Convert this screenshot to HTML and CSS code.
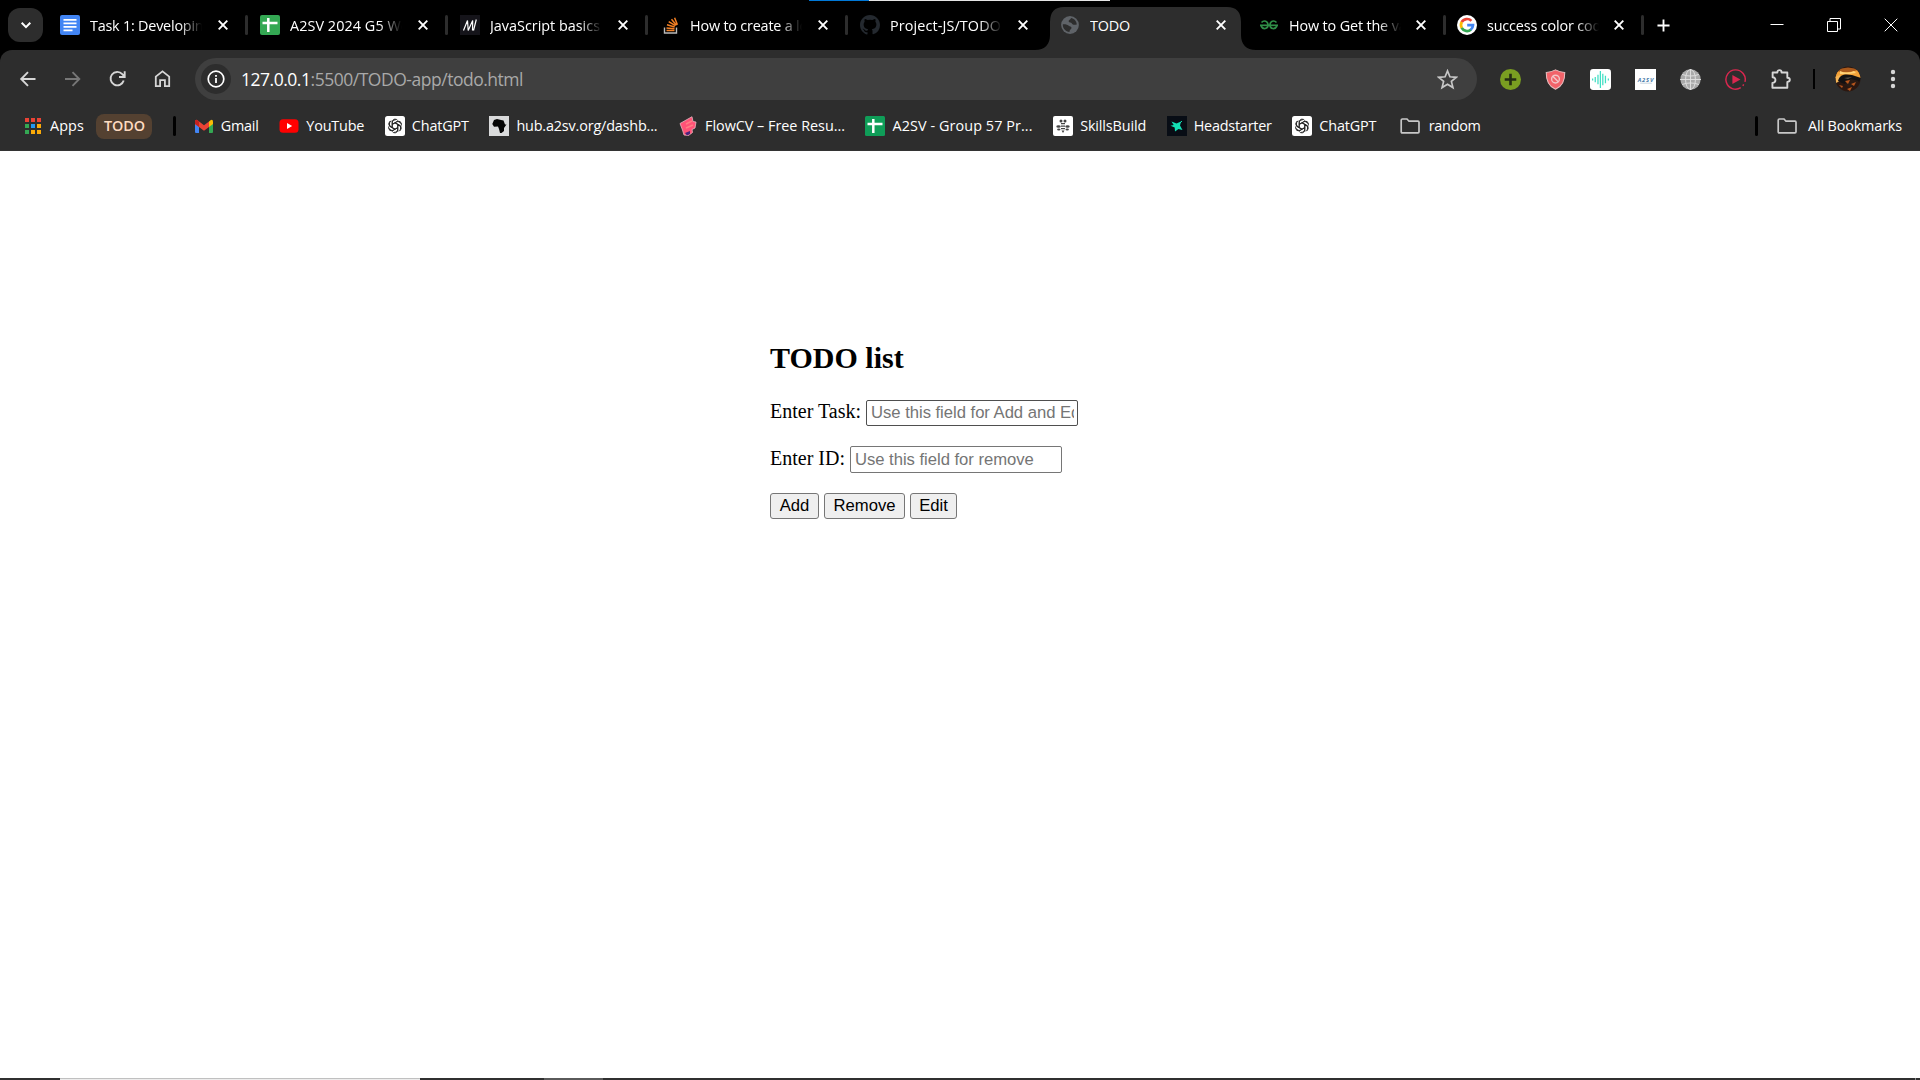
FILE: index.html
```html
<!DOCTYPE html>
<html lang="en">
<head>
<meta charset="utf-8">
<title>TODO</title>
<link rel="stylesheet" href="styles.css">
</head>
<body>
<svg class="defs" width="0" height="0">
  <symbol id="x" viewBox="0 0 16 16"><path d="M3.7 3.7l8.6 8.6M12.3 3.7l-8.6 8.6" stroke="#fff" stroke-width="1.9" fill="none"/></symbol>
  <symbol id="gpt" viewBox="0 0 20 20"><rect width="20" height="20" rx="2.5" fill="#fff"/><g fill="none" stroke="#222" stroke-width=".95"><path id="petal" d="M7.2 11.4V6.2a3 3 0 0 1 5.5-1.7M7.2 8.4l4.2-2.4a3 3 0 0 1 4.3 1.6"/><use href="#petal" transform="rotate(60 10 10)"/><use href="#petal" transform="rotate(120 10 10)"/><use href="#petal" transform="rotate(180 10 10)"/><use href="#petal" transform="rotate(240 10 10)"/><use href="#petal" transform="rotate(300 10 10)"/></g></symbol>
  <symbol id="folder" viewBox="0 0 20 20"><path d="M1.200 4.200q0-1.200 1.200-1.200H7l2 2.200h9q1 0 1 1v9.600q0 1-1 1H2.200q-1 0-1-1z" fill="none" stroke="#c7c7c7" stroke-width="1.700"/></symbol>
</svg>

<header class="browser">
  <div class="edge"><i class="edge-blue"></i><i class="edge-light"></i></div>
  <div class="tabstrip">
    <div class="tabsearch"><svg width="12" height="12" viewBox="0 0 12 12"><path d="M1.700 3.800L6 8.100l4.300-4.300" stroke="#fff" stroke-width="2" fill="none"/></svg></div>
    <div class="tab">
      <svg class="ico" viewBox="0 0 20 20"><rect width="20" height="20" rx="2" fill="#4285f4"/><path d="M3.500 4.800h13M3.500 8.300h13M3.500 11.800h13M3.500 15.300h9" stroke="#fff" stroke-width="1.700"/></svg>
      <div class="title"><span data-w="121">Task 1: Developing</span></div><svg class="close"><use href="#x"/></svg><i class="sep"></i>
    </div>
    <div class="tab">
      <svg class="ico" viewBox="0 0 20 20"><rect width="20" height="20" rx="2" fill="#34a853"/><path d="M2.500 8h15M8.300 3v14" stroke="#fff" stroke-width="2.500"/></svg>
      <div class="title"><span data-w="119">A2SV 2024 G5 We</span></div><svg class="close"><use href="#x"/></svg><i class="sep"></i>
    </div>
    <div class="tab">
      <svg class="ico" viewBox="0 0 20 20"><rect width="20" height="20" fill="#15141a"/><path d="M3.500 15.500L7.500 5.500l.7 10L12.700 5.500l-.2 10M16.300 4.500L13.500 15.500" stroke="#fff" stroke-width="1.200" fill="none" stroke-linejoin="bevel"/></svg>
      <div class="title"><span data-w="110">JavaScript basics</span></div><svg class="close"><use href="#x"/></svg><i class="sep"></i>
    </div>
    <div class="tab">
      <svg class="ico" viewBox="0 0 20 20"><path d="M4.500 12.500v5.500h12v-5.500" stroke="#bcbbbb" stroke-width="1.400" fill="none"/><path d="M6.500 15.600h8M6.500 13l8 .8M7 9.800l7.700 2.200M8.700 6.700l6.700 4M11.500 4.300l5 6M14.600 2.700l2.800 7" stroke="#f48024" stroke-width="1.500"/></svg>
      <div class="title"><span data-w="118">How to create a lo</span></div><svg class="close"><use href="#x"/></svg><i class="sep"></i>
    </div>
    <div class="tab tab-nosep">
      <svg class="ico" viewBox="0 0 16 16"><path fill="#24292f" d="M8 0C3.580 0 0 3.580 0 8c0 3.540 2.290 6.530 5.470 7.590.4.070.55-.17.55-.38v-1.490c-2.230.480-2.700-1.070-2.700-1.070-.36-.92-.89-1.170-.89-1.170-.73-.5.050-.49.050-.49.810.060 1.230.83 1.230.83.720 1.230 1.870.87 2.330.66.070-.52.280-.87.510-1.070-1.780-.2-3.640-.89-3.640-3.950 0-.87.310-1.590.82-2.150-.08-.2-.36-1.020.080-2.120 0 0 .67-.21 2.200.82a7.700 7.700 0 0 1 4 0c1.530-1.040 2.200-.82 2.200-.82.440 1.100.16 1.920.080 2.120.51.560.82 1.270.82 2.150 0 3.070-1.870 3.750-3.650 3.950.29.250.54.730.54 1.480v2.200c0 .21.150.46.550.38A8 8 0 0 0 16 8c0-4.420-3.580-8-8-8z"/></svg>
      <div class="title"><span data-w="111">Project-JS/TODO</span></div><svg class="close"><use href="#x"/></svg><i class="sep"></i>
    </div>
    <div class="tab tab-active tab-nosep">
      <svg class="tab-bg" viewBox="0 0 223 43"><path d="M0 43c10 0 15-6 15-15V15Q15 0 29 0H192Q206 0 206 15V28c0 9 5 15 15 15z" fill="#2d2d2d"/></svg>
      <svg class="ico" viewBox="0 0 20 20"><circle cx="10" cy="10" r="8.900" fill="#5f6368"/><path d="M2.800 9.200c2.500-.2 5.200.4 6 1.600.8 1 2.700.4 2.700 2 0 1.500-1.800 1.500-2 4.200-3.700-.3-7-3.700-6.700-7.800zM11 3c-.3 1.800-2.700 2-2.300 3.600.4 1.400 2.500.5 3.200 1.900.5 1.300 2.400 1.700 4.900.9C16.500 6 14 3.300 11 3z" fill="#2d2d2d"/></svg>
      <div class="title title-short"><span data-w="40">TODO</span></div><svg class="close"><use href="#x"/></svg><i class="sep"></i>
    </div>
    <div class="tab tab-narrow">
      <svg class="ico" viewBox="0 0 20 20"><g fill="none" stroke="#2f8d46" stroke-width="1.700"><path d="M2.500 7.500C5 4.800 9 6 9 10s-5 5-7 1M17.500 7.500C15 4.800 11 6 11 10s5 5 7 1"/><path d="M1 10.300h18"/></g></svg>
      <div class="title"><span data-w="121">How to Get the val</span></div><svg class="close"><use href="#x"/></svg><i class="sep"></i>
    </div>
    <div class="tab tab-narrow">
      <svg class="ico" viewBox="0 0 20 20"><circle cx="10" cy="10" r="10" fill="#fff"/><g fill="none" stroke-width="2.700"><path d="M14.400 5.900A6 6 0 0 0 4.700 7.200" stroke="#ea4335"/><path d="M4.800 7A6 6 0 0 0 4.800 13" stroke="#fbbc05"/><path d="M4.700 12.800A6 6 0 0 0 14 14.500" stroke="#34a853"/><path d="M13.700 14.700A6 6 0 0 0 16 10.200H10.200" stroke="#4285f4"/></g></svg>
      <div class="title"><span data-w="122">success color code</span></div><svg class="close"><use href="#x"/></svg><i class="sep"></i>
    </div>
    <svg class="newtab" viewBox="0 0 14 14"><path d="M7 .5v13M.5 7h13" stroke="#fff" stroke-width="2"/></svg>
    <div class="winctl">
      <svg width="14" height="14" viewBox="0 0 14 14"><path d="M.5 6.500h13" stroke="#fff"/></svg>
      <svg width="14" height="14" viewBox="0 0 14 14"><path d="M.5 3.500h10v10H.5zM3 3V.5h10.500V11H11" stroke="#fff" fill="none"/></svg>
      <svg width="14" height="14" viewBox="0 0 14 14"><path d="M.7.7l12.600 12.600M13.300.7L.7 13.300" stroke="#fff"/></svg>
    </div>
  </div>

  <div class="panel">
    <div class="toolbar">
      <div class="nav">
        <svg viewBox="0 0 20 20"><path d="M17.500 10H3.500M10 3.200L3.200 10l6.800 6.800" stroke="#d6d6d6" stroke-width="1.900" fill="none"/></svg>
        <svg viewBox="0 0 20 20"><path d="M2 10h14M9.500 3.200l6.800 6.800-6.800 6.800" stroke="#777" stroke-width="1.900" fill="none"/></svg>
        <svg viewBox="0 0 20 20"><path d="M15.700 11.500A6.700 6.700 0 1 1 14.300 5.200L16.500 7.600M16.700 2.300V8H11" stroke="#d6d6d6" stroke-width="1.900" fill="none"/></svg>
        <svg viewBox="0 0 20 20"><path d="M2.800 17.200V7.600L9.500 2.300l6.700 5.300v9.600h-4.300v-6H7.100v6z" stroke="#d6d6d6" stroke-width="1.800" fill="none"/></svg>
      </div>
      <div class="omnibox">
        <div class="siteinfo"><svg width="18" height="18" viewBox="0 0 18 18"><circle cx="9" cy="9" r="7.800" fill="none" stroke="#fff" stroke-width="1.700"/><path d="M9 8v5M9 5v1.800" stroke="#fff" stroke-width="1.800"/></svg></div>
        <div class="url"><span data-w="282"><b>127.0.0.1</b>:5500/TODO-app/todo.html</span></div>
        <svg class="star" viewBox="0 0 20 20"><path d="M10 1.800l2.300 5.600 6 .5-4.600 3.900 1.500 5.900L10 14.500l-5.200 3.200 1.500-5.900-4.600-3.900 6-.5z" fill="none" stroke="#c7c7c7" stroke-width="1.600"/></svg>
      </div>
      <div class="extensions">
        <svg viewBox="0 0 20 20"><circle cx="10" cy="10" r="10" fill="#7a9e21"/><path d="M10 4.500v11M4.500 10h11" stroke="#252d14" stroke-width="2.500"/></svg>
        <svg viewBox="0 0 20 20"><path d="M10 .8Q14 3 18.800 3.300C19 11 16.500 16.500 10 19.300 3.500 16.500 1 11 1.200 3.300 6 3 10 .8 10 .8z" fill="#f2636a" stroke="#e4bfc0" stroke-width="1"/><circle cx="10" cy="9.600" r="3.700" fill="none" stroke="#f3c6c8" stroke-width="1.300"/><path d="M7.400 7l5.200 5.200" stroke="#f3c6c8" stroke-width="1.300"/></svg>
        <svg viewBox="0 0 20 20"><rect width="20" height="20" rx="3" fill="#fff"/><path d="M2.500 9v2M5 7.500v5M7.600 5.500v9M9.900 2v16M12.200 4.500v11M14.700 6.500v7M17.500 9v2" stroke="#40dfc4" stroke-width="1.200"/></svg>
        <svg viewBox="0 0 20 20"><rect width="20" height="20" fill="#fff"/><text x="2.500" y="12" class="tiny-logo" textLength="15">A2SV</text><path d="M5 13.500h11" stroke="#8dabc4" stroke-width=".5"/></svg>
        <svg viewBox="0 0 20 20"><circle cx="10" cy="10" r="9.700" fill="#aaa"/><g fill="none" stroke="#e0e0e0" stroke-width=".9"><ellipse cx="10" cy="10" rx="4.700" ry="9.500"/><path d="M10 0v20M0 10h20M2 5.200q8 3 16 0M2 14.800q8-3 16 0"/></g></svg>
        <svg viewBox="0 0 20 20"><path d="M15 17.800A9.200 9.200 0 1 1 19 12.300M17.800 14.700l-.8 1.300" fill="none" stroke="#d9274f" stroke-width="1.400"/><path d="M7 5.800l7.700 4.200L7 14.200z" fill="#d9274f"/></svg>
        <svg viewBox="0 0 20 20"><path d="M2.500 3.300H7c0-3 4-3 4 0h5.500v5c3.200 0 3.200 4 0 4v5.500H2.300v-4.500c3.800 0 3.800-5.500.2-5.500z" fill="none" stroke="#d6d6d6" stroke-width="1.800" stroke-linejoin="round"/></svg>
      </div>
      <i class="toolsep"></i>
      <svg class="avatar" viewBox="0 0 26 26"><defs><clipPath id="av"><circle cx="13" cy="13" r="12.500"/></clipPath></defs><g clip-path="url(#av)"><rect width="26" height="26" fill="#2b1710"/><path d="M0 5Q13-2 26 5v6H0z" fill="#a9591c"/><path d="M2 5q10 3 21-1l3 8H0z" fill="#f2a33a"/><path d="M5 5q7 3 14 0l2 2-7 1H5z" fill="#ffd277"/><path d="M0 11l5-2 2 5-6 3z" fill="#f5b455"/><path d="M3 15c2-7 7-7 14-6l9 3-2 4-7-1-4 4-6-2z" fill="#121112"/><path d="M11 15l5-2 8 2-4 4-6 3-4-3z" fill="#2a1b14"/><path d="M10 15l5-1-2 4zM16 18l5-2-2 4zM4 19l4 1-1 2zM12 23l5-2-2 4z" fill="#b8561c"/><path d="M9 12l8-1-4 2z" fill="#5a5046"/></g></svg>
      <svg class="kebab" viewBox="0 0 6 20"><g fill="#d6d6d6"><circle cx="3" cy="3" r="2.200"/><circle cx="3" cy="10" r="2.200"/><circle cx="3" cy="17" r="2.200"/></g></svg>
    </div>

    <div class="bookmarks">
      <div class="bm bm-apps"><svg class="ico apps" viewBox="0 0 18 18"><path d="M1 1h4v4H1zM7 1h4v4H7zM13 1h4v4h-4z" fill="#ea4335"/><path d="M1 7h4v4H1zM1 13h4v4H1z" fill="#34a853"/><path d="M7 7h4v4H7z" fill="#2196f3"/><path d="M13 7h4v4h-4zM7 13h4v4H7zM13 13h4v4h-4z" fill="#fbab09"/></svg><span data-w="34">Apps</span></div>
      <div class="chip"><span data-w="41">TODO</span></div>
      <i class="bmsep"></i>
      <div class="bm"><svg class="ico" viewBox="0 0 20 20"><path d="M1 5v11q0 1 1 1h3V8z" fill="#4285f4"/><path d="M19 5v11q0 1-1 1h-3V8z" fill="#34a853"/><path d="M15 5.500l1.500-1.300Q19 3 19 6v2l-4 3z" fill="#fbbc04"/><path d="M1 8V6q0-3 2.500-1.800L10 9.300l5-3.800V11l-5 3.800L5 11z" fill="#ea4335"/><path d="M1 8V6q0-3 2.500-1.800L5 5.500V11z" fill="#c5221f"/></svg><span data-w="38">Gmail</span></div>
      <div class="bm"><svg class="ico" viewBox="0 0 20 20"><rect x=".5" y="3.200" width="19" height="13.600" rx="3.500" fill="#f00"/><path d="M8 7l5.200 3L8 13z" fill="#fff"/></svg><span data-w="58">YouTube</span></div>
      <div class="bm"><svg class="ico"><use href="#gpt"/></svg><span data-w="57">ChatGPT</span></div>
      <div class="bm"><svg class="ico" viewBox="0 0 20 20"><rect width="20" height="20" fill="#d9dadb"/><path d="M5 4l3-1 4 1 2.500.5L16 8.500h1.500L15 12v3l-2.500 2H11l-1-4-1-2.500-4 .3L3.300 8z" fill="#050505"/></svg><span data-w="141">hub.a2sv.org/dashb...</span></div>
      <div class="bm"><svg class="ico" viewBox="0 0 20 20"><path d="M2 7.500L14 .7l1 4.800 3 .5-1 6-3 1.500.5 3-4 3L6 19 4.500 14z" fill="#ff5277" stroke="#e6b7c2" stroke-width=".8"/><path d="M8 8l6-3M8 12l7-3" stroke="#ff7e83" stroke-width="1.500"/><path d="M7 17l5-2v3l-3 1.500z" fill="#49237c"/></svg><span data-w="140">FlowCV – Free Resu...</span></div>
      <div class="bm"><svg class="ico" viewBox="0 0 20 20"><rect width="20" height="20" rx="1.500" fill="#0f9d58"/><path d="M2.500 8h15M8.300 3v14" stroke="#fff" stroke-width="2.500"/></svg><span data-w="140">A2SV - Group 57 Pr...</span></div>
      <div class="bm"><svg class="ico" viewBox="0 0 20 20"><rect width="20" height="20" rx="2" fill="#fff"/><g fill="#444"><circle cx="8" cy="5" r="1.500"/><circle cx="12" cy="5" r="1.500"/><ellipse cx="5.500" cy="10.500" rx="2.200" ry="1.300"/><ellipse cx="14.500" cy="10.500" rx="2.200" ry="1.300"/><ellipse cx="5.800" cy="13.500" rx="1.700" ry="1.100"/><ellipse cx="14.200" cy="13.500" rx="1.700" ry="1.100"/><path d="M8 7h4v1.300H8zM8 9.500h4v1.300H8zM8 12h4v1.300H8zM8.500 14.500h3L10 17z"/></g></svg><span data-w="66">SkillsBuild</span></div>
      <div class="bm"><svg class="ico" viewBox="0 0 20 20"><rect width="20" height="20" fill="#080d15"/><path d="M4.500 5.500l5 2L14 5.500l-1 4 2.500 4.500-4-1-3.500 2.500-.3-4L3.500 9.700l3.200-.7z" fill="#13e0b4"/><path d="M13 7l2-2" stroke="#13e0b4"/></svg><span data-w="78">Headstarter</span></div>
      <div class="bm"><svg class="ico"><use href="#gpt"/></svg><span data-w="57">ChatGPT</span></div>
      <div class="bm bm-folder"><svg class="ico"><use href="#folder"/></svg><span data-w="52">random</span></div>
      <i class="bmsep bmsep-right"></i>
      <div class="bm bm-all"><svg class="ico"><use href="#folder"/></svg><span data-w="94">All Bookmarks</span></div>
    </div>
  </div>
</header>

<main class="page">
  <div class="todo">
    <h2>TODO list</h2>
    <p><label for="task">Enter Task:</label> <input class="task" id="task" type="text" placeholder="Use this field for Add and Edit"></p>
    <p><label for="tid">Enter ID:</label> <input id="tid" type="text" placeholder="Use this field for remove"></p>
    <p class="buttons"><button class="add">Add</button><button class="remove">Remove</button><button class="edit">Edit</button></p>
  </div>
</main>
<footer class="taskbar"><i class="task-active"></i><i class="task-idle"></i><i class="task-peek"></i></footer>
<script src="fit.js"></script>
</body>
</html>
```
FILE: styles.css
```css
* { box-sizing: border-box; }
html, body { height: 100%; }
body { margin: 0; display: flex; flex-direction: column; overflow: hidden; background: #fff; color: #000; font-family: "Liberation Serif", serif; font-size: 20px; }
svg { display: block; flex: none; }
.defs { position: absolute; }

.browser { flex: none; position: relative; height: 151px; background: #000; color: #fff; font: 14.4px/20px "Open Sans", "Noto Sans", sans-serif; }
.browser span { white-space: pre; display: inline-block; }
.edge { position: absolute; top: 0; left: 809px; display: flex; }
.edge i { height: 1px; }
.edge-blue { width: 60px; background: #0078d7; }
.edge-light { width: 241px; background: #e5e5e5; }

.tabstrip { height: 50px; display: flex; align-items: center; padding-left: 8px; }
.tabsearch { width: 35px; height: 34px; margin-right: 17px; border-radius: 12px; background: #2d2d2d; display: flex; align-items: center; justify-content: center; }
.ico { width: 20px; height: 20px; }
.tab { position: relative; width: 200px; height: 50px; display: flex; align-items: center; flex: none; }
.title { width: 112px; margin: 1px 12.5px 0 10px; overflow: hidden; -webkit-mask-image: linear-gradient(90deg, #000 80%, transparent); mask-image: linear-gradient(90deg, #000 80%, transparent); }
.title-short { -webkit-mask-image: none; mask-image: none; }
.close { width: 16px; height: 16px; }
.sep { width: 3px; height: 20px; margin-left: 14.5px; border-radius: 2px; background: #2d2d2d; }
.tab-narrow { width: 198px; }
.tab-narrow .title { margin-right: 11.5px; }
.tab-nosep .sep { visibility: hidden; }
.tab-active { width: 199px; }
.tab-active .title { margin-right: 11px; }
.tab-active > * { position: relative; }
.tab-active .tab-bg { position: absolute; left: -25px; top: 7px; width: 223px; height: 43px; }
.newtab { width: 13px; height: 13px; margin-left: 2px; }
.winctl { margin-left: auto; display: flex; gap: 43px; padding-right: 22px; }

.panel { height: 101px; background: #2d2d2d; border-radius: 12px 12px 0 0; border-bottom: 1px solid #333; }
.toolbar { height: 58px; display: flex; align-items: center; padding: 0 24px 0 18px; }
.nav { display: flex; gap: 25px; width: 177px; }
.nav svg { width: 20px; height: 20px; }
.omnibox { width: 1282px; height: 42px; border-radius: 21px; background: #3f3f3f; display: flex; align-items: center; padding: 0 19px 0 6px; }
.siteinfo { width: 30px; height: 30px; border-radius: 50%; background: #2d2d2d; display: flex; align-items: center; justify-content: center; }
.url { margin-left: 10px; font-size: 17.5px; line-height: 24px; color: #a9a9a9; }
.url b { font-weight: 400; color: #fff; }
.star { width: 21px; height: 21px; margin-left: auto; }
.extensions { display: flex; gap: 24px; margin-left: 23px; }
.extensions svg { width: 21px; height: 21px; }
.tiny-logo { font: italic 700 5.5px "Open Sans", sans-serif; fill: #467aa8; }
.toolsep { width: 2px; height: 20px; margin-left: 22px; background: #000; }
.avatar { width: 26px; height: 26px; margin-left: 20px; }
.kebab { width: 6px; height: 20px; margin-left: auto; }

.bookmarks { height: 42px; display: flex; align-items: center; padding: 0 18px 6px 24px; }
.bm { display: flex; align-items: center; gap: 7.2px; margin-right: 20.4px; }
.bm span { color: #fff; }
.apps { width: 18px; height: 18px; }
.bm-apps { gap: 8px; margin-right: 12px; }
.chip { width: 56px; height: 25px; border-radius: 8px; background: #544131; color: #ffdcc1; font-weight: 600; line-height: 24px; padding-left: 8px; }
.bmsep { width: 3px; height: 20px; border-radius: 2px; background: #000; margin: 0 18px 0 20.5px; }
.bmsep-right { margin: 0 19px 0 auto; }
.bm-folder { margin: 0 0 0 3px; gap: 9px; }
.bm-all { margin: 0; gap: 11px; }

.page { flex: 1; display: flex; padding: 189px 0 0 770px; }
.todo { display: flex; flex-direction: column; }
.todo h2 { margin: 0 0 23px; font-size: 30px; line-height: 36px; }
.todo p { margin: 0 0 20px; height: 27px; display: flex; align-items: center; gap: 5px; line-height: 23px; white-space: nowrap; }
.todo .buttons { height: 25px; }
.todo label { position: relative; top: -1px; }
.todo input { width: 212px; height: 27px; margin: 0; padding: 1px 3px 1px 4px; border: 1px solid #767676; border-radius: 2px; font: 16.667px "Liberation Sans", Arial, sans-serif; letter-spacing: -.03px; }
.todo .task { height: 26px; border-color: #4f4f4f; }
.todo input::placeholder { color: #757575; }
.todo button { height: 26px; margin: 0; padding: 0; border: 1px solid #767676; border-radius: 3px; background: #efefef; color: #000; font: 16.667px/22px "Liberation Sans", Arial, sans-serif; }
.todo .add { width: 49px; }
.todo .remove { width: 81px; }
.todo .edit { width: 47px; }

.taskbar { flex: none; height: 2px; background: #303030; display: flex; padding: 0 4px 0 60px; }
.task-active { width: 360px; margin-right: 124px; background: #ececec; border-top: 1px solid #c0c0c0; }
.task-idle { width: 59px; background: #5a5a5a; }
.task-peek { width: 1px; margin-left: auto; background: #8a8a8a; }
```
FILE: fit.js
```js
// Tighten letter spacing so each label fills its allotted width.
document.querySelectorAll('[data-w]').forEach(function (el) {
  var natural = el.getBoundingClientRect().width;
  var gap = (Number(el.dataset.w) - natural) / el.textContent.length;
  el.style.letterSpacing = gap.toFixed(3) + 'px';
});
```
